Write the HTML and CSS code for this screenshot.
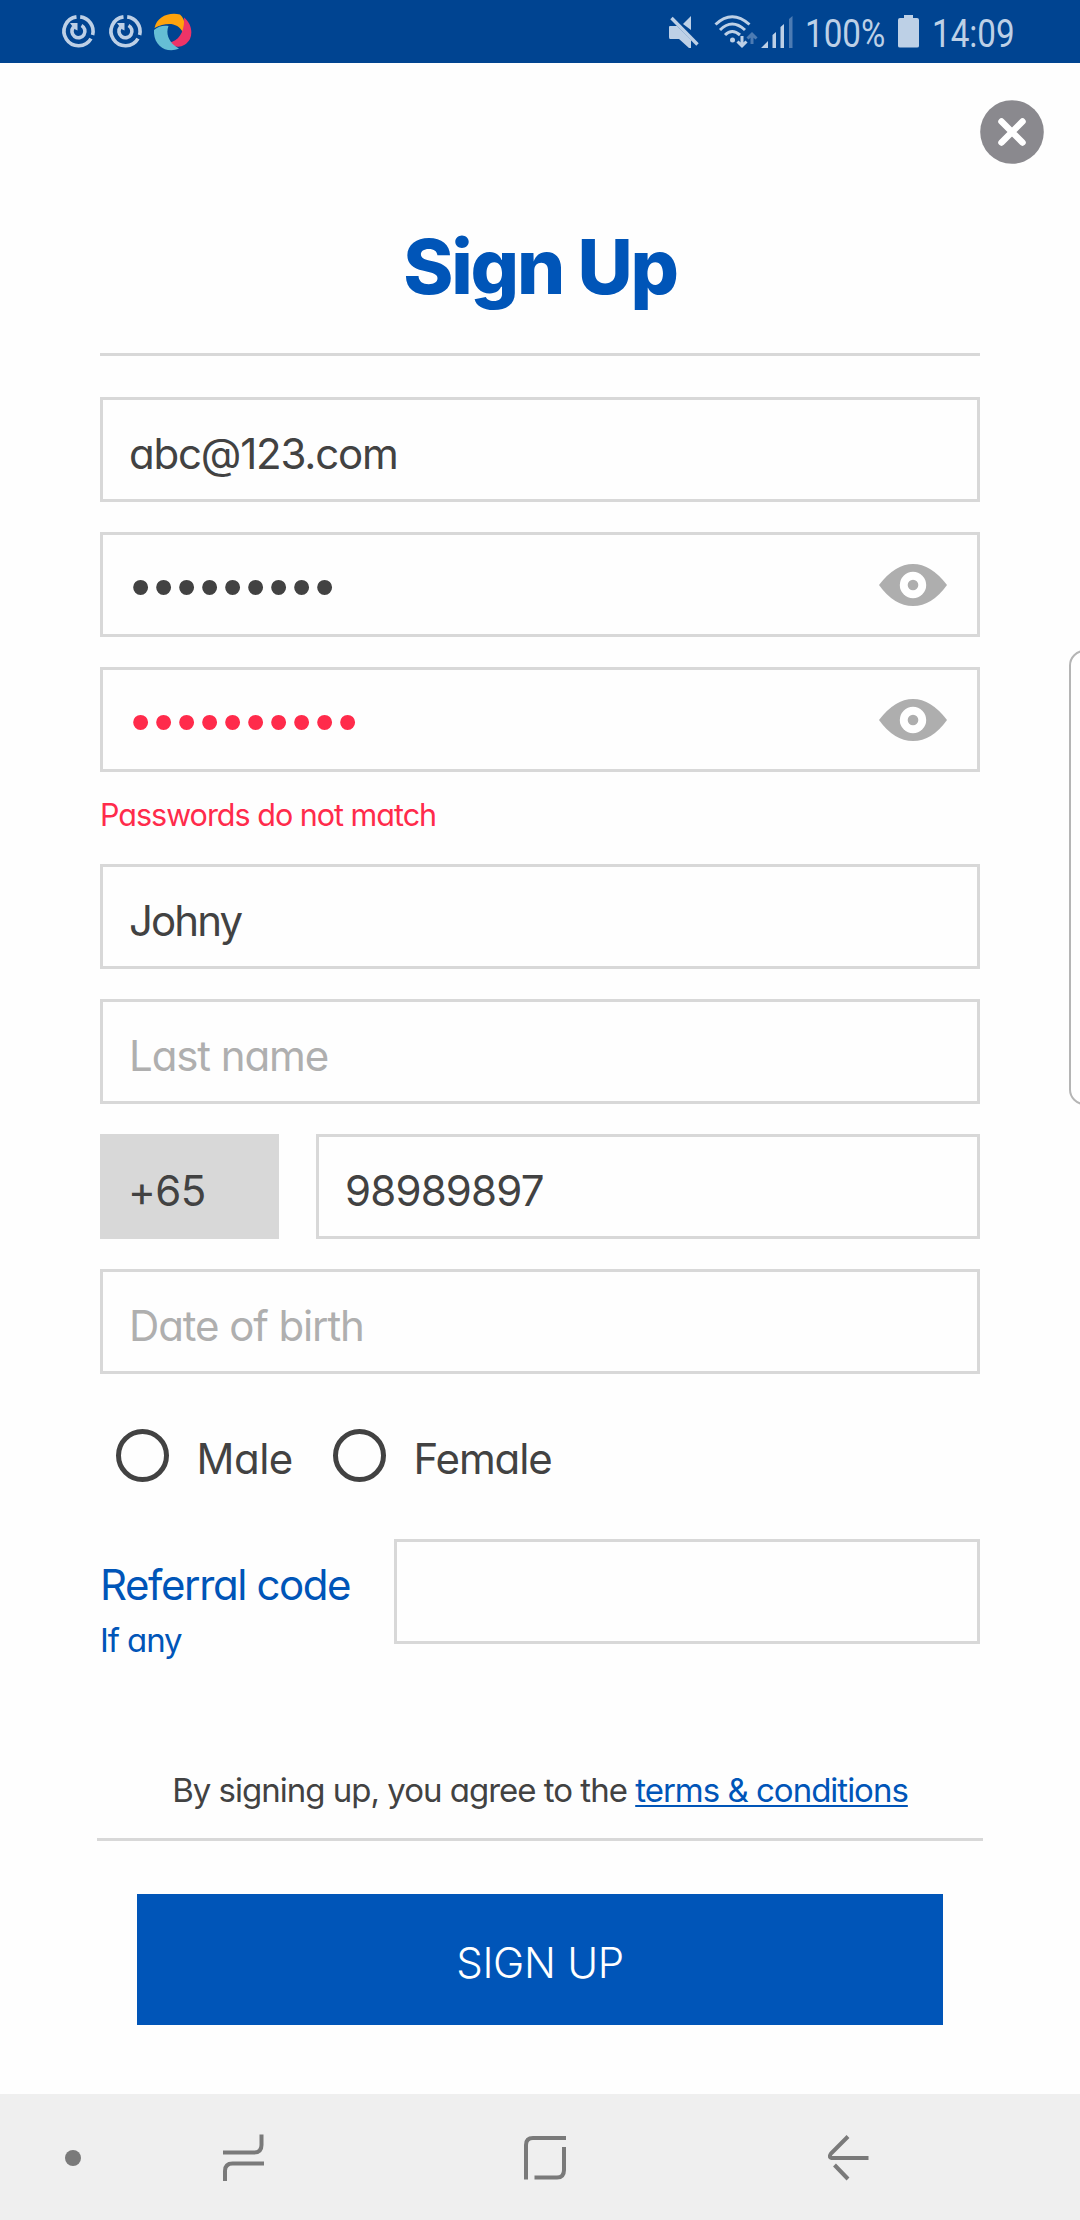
FILE: index.html
```html
<!DOCTYPE html>
<html lang="en">
<head>
<meta charset="utf-8">
<title>Sign Up</title>
<link rel="stylesheet" href="styles.css">
</head>
<body>
<div class="screen">
  <header class="status">
    <div class="notifications">
      <svg width="34" height="34" viewBox="0 0 34 34" class="sync"><path d="M15.500 2.900A14.500 14.500 0 1 0 30 24.600M19.200 2.900A14.500 14.500 0 0 1 31.600 21"/><path d="M20.500 11.500A6.500 6.500 0 1 1 12.500 13"/><path class="head" d="M9 9H16.500V16.500L13.500 15L11.500 12.500Z"/></svg>
      <svg width="34" height="34" viewBox="0 0 34 34" class="sync"><path d="M15.500 2.900A14.500 14.500 0 1 0 30 24.600M19.200 2.900A14.500 14.500 0 0 1 31.600 21"/><path d="M20.500 11.500A6.500 6.500 0 1 1 12.500 13"/><path class="head" d="M9 9H16.500V16.500L13.500 15L11.500 12.500Z"/></svg>
      <svg width="38" height="38" viewBox="0 0 38 38">
        <path fill="#ffa30c" d="M.5 15C3 4 14-1 26 1.500C31 6 32 13 29 19.500C24 9 12 9 .5 15Z"/>
        <path fill="#ee3467" d="M30 4.500C37 10 39 19 36 26C31 35 21 36 15 29.500C25 28 31 18 30 4.500Z"/>
        <path fill="#65bed5" d="M0 17C4 13 10 12 14.500 13C11 22 16 31 25 35.500C13 41-1 33 0 17Z"/>
      </svg>
    </div>
    <div class="indicators">
      <svg width="32" height="34" viewBox="0 0 32 34"><path fill="currentColor" d="M1 11H8L22 25V33H20L10 24H1Q0 24 0 22V12Q0 11 1 11ZM22 1V15L14 9Z"/><path d="M2.500 3L28.500 29.500" stroke="currentColor" stroke-width="3.400"/></svg>
      <svg width="44" height="34" viewBox="0 0 44 34" fill="none" stroke="currentColor" stroke-width="3"><path d="M1.500 9.500Q18-6 35.500 9.500M6 15Q18 3 31 15M11 20Q18 13 26 20"/><circle cx="18.500" cy="25" r="2.500" fill="currentColor" stroke="none"/><path d="M28 21V31M23.500 26.500L28 31L32.500 26.500"/><path class="dim" d="M38 29V19M33.500 23.500L38 19L42.500 23.500"/></svg>
      <svg width="32" height="34" viewBox="0 0 32 34" fill="currentColor"><path d="M0 33L7 26V33ZM11.500 33V20L15 17V33ZM19.500 33V12L23 9V33Z"/><path class="dim" d="M28 33V4L31.500 1V33Z"/></svg>
      <span class="battery-level">100%</span>
      <svg width="21" height="33" viewBox="0 0 21 33"><path fill="currentColor" d="M6 0H15V3H19Q21 3 21 5V31Q21 32.500 19 32.500H2Q0 32.500 0 31V5Q0 3 2 3H6Z"/></svg>
      <span class="clock">14:09</span>
    </div>
  </header>

  <main class="page">
    <div class="close-row">
      <svg class="close" width="64" height="64" viewBox="0 0 64 64"><circle cx="32" cy="32" r="31.800" fill="#8a898e"/><path d="M21.500 21.500L42.500 42.500M42.500 21.500L21.500 42.500" stroke="#fff" stroke-width="6.500" stroke-linecap="round"/></svg>
    </div>
    <h1 class="title">Sign Up</h1>
    <form class="form">
      <div class="field"><span class="email">abc@123.com</span></div>
      <div class="field password"><span class="dots">•••••••••</span>
        <svg width="68" height="42" viewBox="0 0 68 42"><path fill="#aeaeae" d="M0 21Q16 0 34 0T68 21Q53 42 34 42T0 21Z"/><circle cx="34" cy="21" r="13.200" fill="#fff"/><circle cx="34" cy="21" r="5.300" fill="#aeaeae"/></svg>
      </div>
      <div class="field password invalid"><span class="dots">••••••••••</span>
        <svg width="68" height="42" viewBox="0 0 68 42"><path fill="#aeaeae" d="M0 21Q16 0 34 0T68 21Q53 42 34 42T0 21Z"/><circle cx="34" cy="21" r="13.200" fill="#fff"/><circle cx="34" cy="21" r="5.300" fill="#aeaeae"/></svg>
      </div>
      <p class="error">Passwords do not match</p>
      <div class="field"><span class="first-name">Johny</span></div>
      <div class="field placeholder"><span>Last name</span></div>
      <div class="phone">
        <div class="field country"><span>+65</span></div>
        <div class="field number"><span>98989897</span></div>
      </div>
      <div class="field placeholder"><span>Date of birth</span></div>
      <div class="gender">
        <label class="choice"><i class="radio"></i><span class="male">Male</span></label>
        <label class="choice"><i class="radio"></i><span class="female">Female</span></label>
      </div>
      <div class="referral">
        <div class="referral-text"><span class="referral-label">Referral code</span><span class="referral-hint">If any</span></div>
        <div class="field code"></div>
      </div>
    </form>
    <p class="terms">By signing up, you agree to the <a class="link">terms &amp; conditions</a></p>
    <div class="submit">SIGN UP</div>
  </main>

  <nav class="navbar">
    <i class="nav-dot"></i>
    <svg class="recents" width="41" height="48" viewBox="0 0 41 48"><path d="M0 18.500H31Q38.500 18.500 38.500 11V.500M41 29.500H9.500Q2 29.500 2 37V47"/></svg>
    <svg class="home" width="42" height="44" viewBox="0 0 42 44"><path d="M42 2H9Q2 2 2 9V43.500M40 11V34Q40 41.500 33 41.500H10.500"/></svg>
    <svg class="back" width="41" height="46" viewBox="0 0 41 46"><path d="M20 1.500L3 18.500Q0 23 5 23H40.500M6.500 30L20 44"/></svg>
  </nav>
  <aside class="edge-handle"></aside>
</div>
</body>
</html>
```
FILE: styles.css
```css
* { box-sizing: border-box; margin: 0; padding: 0; }

body {
  background: #fefefe;
  color: #424242;
  font-family: Inter, "Liberation Sans", sans-serif;
  font-feature-settings: "cv11";
}

svg { display: block; flex: none; }

.screen {
  position: relative;
  width: 1080px;
  height: 2220px;
  overflow: hidden;
  display: flex;
  flex-direction: column;
}

/* Status bar */
.status {
  height: 63px;
  padding: 0 65px 0 61px;
  display: flex;
  justify-content: space-between;
  background: #004491;
  color: #bdd0e6;
}
.notifications { display: flex; align-items: flex-start; gap: 13px; padding-top: 13px; }
.notifications svg:last-child { margin-left: -1px; }
.sync { fill: none; stroke: #bdd0e6; stroke-width: 3.6; margin-top: 1px; overflow: visible; }
.sync .head { fill: #bdd0e6; stroke: none; }
.indicators { display: flex; align-items: flex-start; padding-top: 15px; }
.indicators svg:nth-of-type(2) { margin-left: 13px; }
.indicators svg:nth-of-type(3) { margin-left: 3px; }
.dim { opacity: .4; }
.battery-level, .clock {
  font: 400 39.5px/47px Roboto, sans-serif;
  white-space: nowrap;
  transform: scaleX(.84);
  transform-origin: 0 0;
}
.battery-level { width: 80px; margin: -5px 13px 0 12px; }
.clock { width: 83px; margin: -5px 0 0 13px; }

/* Page */
.page { flex: 1; display: flex; flex-direction: column; padding: 0 97px; }
.close-row { display: flex; justify-content: flex-end; margin: 37px -60px 0 0; }
.close-row svg { margin-right: -0.5px; }
.title {
  height: 192px;
  margin: 0 3px;
  padding-top: 56px;
  border-bottom: 3px solid #d8d8d8;
  color: #0055b8;
  font-size: 76px;
  font-weight: 800;
  line-height: 92px;
  letter-spacing: -2.2px;
  text-align: center;
}
.form { display: flex; flex-direction: column; gap: 30px; padding: 41px 3px 0; }
.field {
  height: 105px;
  padding: 7px 26px 0;
  display: flex;
  align-items: center;
  border: 3px solid #d8d8d8;
  font-size: 42px;
  font-weight: 380;
  letter-spacing: -1.1px;
  white-space: nowrap;
}
.email { letter-spacing: -1.2px; }
.first-name { letter-spacing: -1.9px; }
.placeholder { color: #afafaf; }
.password { justify-content: space-between; padding: 0 30px 0 28px; }
.dots { padding-top: 5px; font: 55px/60px "Liberation Sans", sans-serif; letter-spacing: 3.75px; }
.invalid .dots { color: #ff2b4b; }
.error {
  height: 71px;
  margin: -9px 0 -30px;
  color: #ff2b4b;
  font-size: 30.5px;
  font-weight: 380;
  line-height: 44px;
  letter-spacing: -1px;
}
.phone { display: flex; gap: 37px; }
.country { width: 179px; padding-left: 25px; background: #d8d8d8; letter-spacing: -.5px; }
.number { flex: 1; letter-spacing: -.8px; }

.gender { display: flex; gap: 40px; height: 105px; padding: 25px 0 0 15.5px; }
.choice { display: flex; gap: 28px; height: 53px; font-size: 42px; font-weight: 380; line-height: 60px; }
.radio { width: 53px; height: 53px; border: 5px solid #424242; border-radius: 50%; }
.male { letter-spacing: -.5px; width: 96px; }
.female { letter-spacing: -1.1px; }

.referral { display: flex; justify-content: space-between; color: #0055b8; }
.referral-text { display: flex; flex-direction: column; padding-top: 20px; font-weight: 380; }
.referral-label { font-size: 42px; line-height: 52px; letter-spacing: -1.4px; }
.referral-hint { font-size: 33px; line-height: 58px; letter-spacing: -1.1px; }
.code { width: 586px; }

.terms {
  height: 105px;
  margin-top: auto;
  padding-top: 29px;
  border-bottom: 3px solid #d8d8d8;
  font-size: 33px;
  font-weight: 380;
  line-height: 50px;
  letter-spacing: -1px;
  text-align: center;
}
.link { color: #0055b8; text-decoration: underline; text-decoration-thickness: 2px; text-underline-offset: 3px; text-decoration-skip-ink: none; }
.submit {
  height: 131px;
  margin: 53px 40px 69px;
  background: #0055b8;
  color: #fff;
  font-size: 42px;
  font-weight: 350;
  line-height: 137px;
  letter-spacing: -.3px;
  text-align: center;
}

/* Navigation bar */
.navbar { height: 126px; padding-left: 65px; display: flex; align-items: center; background: #efefef; }
.navbar svg { fill: none; stroke: #7a7a7a; stroke-width: 4; }
.nav-dot { width: 16px; height: 16px; margin-top: 2px; border-radius: 50%; background: #7a7a7a; }
.recents { margin-left: 142px; margin-top: 2px; }
.home { margin-left: 260px; margin-top: 2px; }
.back { margin-left: 262px; margin-top: 2px; }

/* Edge panel handle, overlapping the page */
.edge-handle {
  position: absolute;
  top: 650px;
  right: -20px;
  width: 31px;
  height: 455px;
  border: 2px solid #b5b5b5;
  border-radius: 16px;
  background: #fff;
}
```
